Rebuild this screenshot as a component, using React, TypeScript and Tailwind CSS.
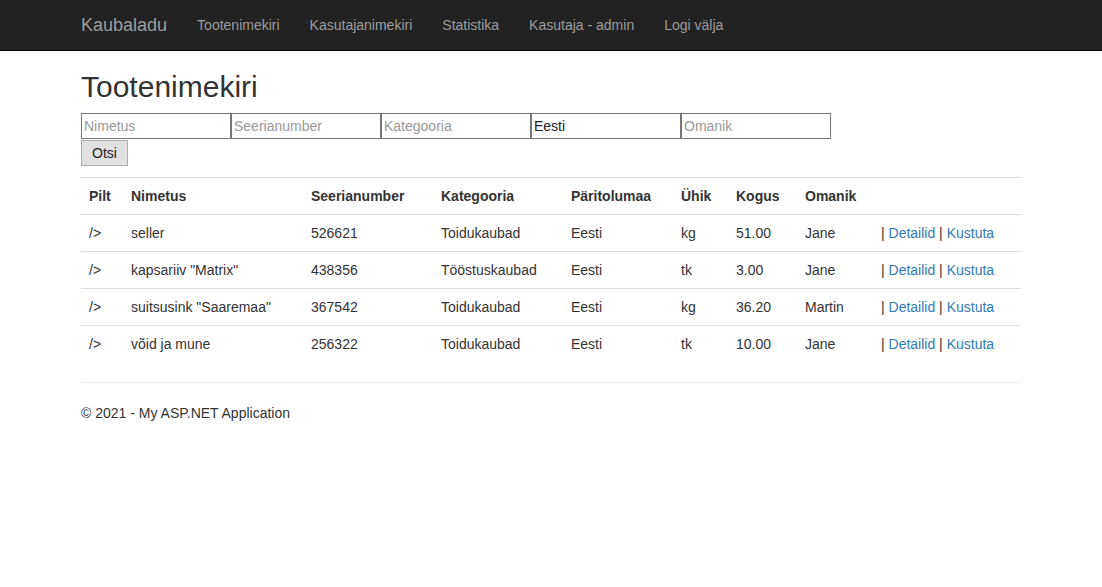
import React from 'react';

const navLinks = ['Tootenimekiri', 'Kasutajanimekiri', 'Statistika', 'Kasutaja - admin', 'Logi välja'];

const filters = [
  { placeholder: 'Nimetus', value: '' },
  { placeholder: 'Seerianumber', value: '' },
  { placeholder: 'Kategooria', value: '' },
  { placeholder: 'Päritolumaa', value: 'Eesti' },
  { placeholder: 'Omanik', value: '' },
];

const rows = [
  { name: 'seller', serial: '526621', category: 'Toidukaubad', country: 'Eesti', unit: 'kg', amount: '51.00', owner: 'Jane' },
  { name: 'kapsariiv "Matrix"', serial: '438356', category: 'Tööstuskaubad', country: 'Eesti', unit: 'tk', amount: '3.00', owner: 'Jane' },
  { name: 'suitsusink "Saaremaa"', serial: '367542', category: 'Toidukaubad', country: 'Eesti', unit: 'kg', amount: '36.20', owner: 'Martin' },
  { name: 'võid ja mune', serial: '256322', category: 'Toidukaubad', country: 'Eesti', unit: 'tk', amount: '10.00', owner: 'Jane' },
];

// column widths as in the bootstrap table
const cols = ['w-[42px]', 'w-[180px]', 'w-[130px]', 'w-[130px]', 'w-[110px]', 'w-[55px]', 'w-[69px]', 'w-[76px]', 'w-[148px]'];
const headers = ['Pilt', 'Nimetus', 'Seerianumber', 'Kategooria', 'Päritolumaa', 'Ühik', 'Kogus', 'Omanik', ''];

export default function App() {
  return (
    <div className="min-h-[587px] bg-white text-[14px] leading-[20px] text-[#333] font-['Liberation_Sans',Arial,sans-serif]">
      {/* Navbar */}
      <nav className="h-[51px] bg-[#222] border-b border-[#080808]">
        <div className="w-[940px] mx-auto flex items-center h-[50px]">
          <span className="text-[18px] leading-[20px] text-[#9d9d9d] pr-[15px]">Kaubaladu</span>
          {navLinks.map((l) => (
            <a key={l} href="#" className="px-[15px] py-[15px] text-[#9d9d9d]">
              {l}
            </a>
          ))}
        </div>
      </nav>

      <div className="w-[940px] mx-auto">
        <h2 className="mt-[19px] mb-[10px] text-[30px] leading-[33px] font-medium">Tootenimekiri</h2>

        {/* Search form */}
        <div className="flex">
          {filters.map((f) => (
            <input
              key={f.placeholder}
              placeholder={f.placeholder}
              defaultValue={f.value}
              className="w-[150px] h-[26px] border border-[#767676] px-[2px] text-[14px] text-[#222] placeholder:text-[#999] outline-none"
            />
          ))}
        </div>
        <button className="mt-[1px] h-[26px] px-[10px] bg-[#e1e1e1] border border-[#adadad] text-[14px] text-[#222]">
          Otsi
        </button>

        {/* Table */}
        <table className="mt-[11px] mb-[20px] w-full table-fixed border-collapse">
          <colgroup>
            {cols.map((c, i) => (
              <col key={i} className={c} />
            ))}
          </colgroup>
          <tbody>
            <tr>
              {headers.map((h, i) => (
                <th key={i} className="p-[8px] text-left font-bold border-t border-[#ddd] align-bottom">
                  {h}
                </th>
              ))}
            </tr>
            {rows.map((r) => (
              <tr key={r.serial}>
                <td className="p-[8px] border-t border-[#ddd]">/&gt;</td>
                <td className="p-[8px] border-t border-[#ddd]">{r.name}</td>
                <td className="p-[8px] border-t border-[#ddd]">{r.serial}</td>
                <td className="p-[8px] border-t border-[#ddd]">{r.category}</td>
                <td className="p-[8px] border-t border-[#ddd]">{r.country}</td>
                <td className="p-[8px] border-t border-[#ddd]">{r.unit}</td>
                <td className="p-[8px] border-t border-[#ddd]">{r.amount}</td>
                <td className="p-[8px] border-t border-[#ddd]">{r.owner}</td>
                <td className="p-[8px] border-t border-[#ddd]">
                  | <a href="#" className="text-[#337ab7]">Detailid</a> | <a href="#" className="text-[#337ab7]">Kustuta</a>
                </td>
              </tr>
            ))}
          </tbody>
        </table>

        <hr className="border-t border-[#eee] mb-[20px]" />
        <footer>
          <p>© 2021 - My ASP.NET Application</p>
        </footer>
      </div>
    </div>
  );
}
